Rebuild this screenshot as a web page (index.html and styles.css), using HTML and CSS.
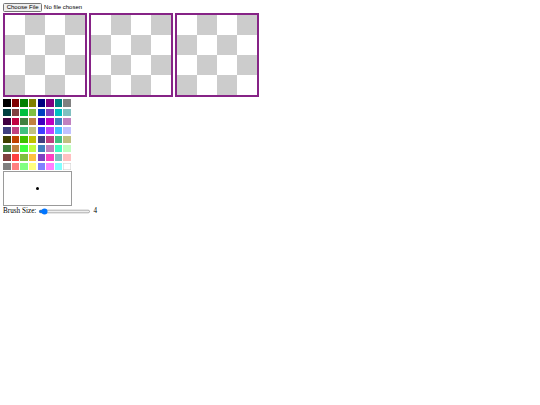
FILE: index.html
```html
<!DOCTYPE html>
<html>
<head>
<meta charset="utf-8">
<link rel="stylesheet" href="styles.css">
</head>
<body>
<div class="app">
  <input type="file" class="file">
  <div class="frames">
    <div class="frame"></div>
    <div class="frame"></div>
    <div class="frame"></div>
  </div>
  <div class="palette">
    <div class="sw" style="background:#000000"></div><div class="sw" style="background:#800000"></div><div class="sw" style="background:#008000"></div><div class="sw" style="background:#808000"></div><div class="sw" style="background:#000080"></div><div class="sw" style="background:#800080"></div><div class="sw" style="background:#008080"></div><div class="sw" style="background:#808080"></div>
    <div class="sw" style="background:#004040"></div><div class="sw" style="background:#804040"></div><div class="sw" style="background:#00c040"></div><div class="sw" style="background:#80c040"></div><div class="sw" style="background:#0040c0"></div><div class="sw" style="background:#8040c0"></div><div class="sw" style="background:#00c0c0"></div><div class="sw" style="background:#80c0c0"></div>
    <div class="sw" style="background:#400040"></div><div class="sw" style="background:#c00040"></div><div class="sw" style="background:#408040"></div><div class="sw" style="background:#c08040"></div><div class="sw" style="background:#4000c0"></div><div class="sw" style="background:#c000c0"></div><div class="sw" style="background:#4080c0"></div><div class="sw" style="background:#c080c0"></div>
    <div class="sw" style="background:#404080"></div><div class="sw" style="background:#c04080"></div><div class="sw" style="background:#40c080"></div><div class="sw" style="background:#c0c080"></div><div class="sw" style="background:#4040ff"></div><div class="sw" style="background:#c040ff"></div><div class="sw" style="background:#40c0ff"></div><div class="sw" style="background:#c0c0ff"></div>
    <div class="sw" style="background:#404000"></div><div class="sw" style="background:#c04000"></div><div class="sw" style="background:#40c000"></div><div class="sw" style="background:#c0c000"></div><div class="sw" style="background:#404080"></div><div class="sw" style="background:#c04080"></div><div class="sw" style="background:#40c080"></div><div class="sw" style="background:#c0c080"></div>
    <div class="sw" style="background:#408040"></div><div class="sw" style="background:#c08040"></div><div class="sw" style="background:#40ff40"></div><div class="sw" style="background:#c0ff40"></div><div class="sw" style="background:#4080c0"></div><div class="sw" style="background:#c080c0"></div><div class="sw" style="background:#40ffc0"></div><div class="sw" style="background:#c0ffc0"></div>
    <div class="sw" style="background:#804040"></div><div class="sw" style="background:#ff4040"></div><div class="sw" style="background:#80c040"></div><div class="sw" style="background:#ffc040"></div><div class="sw" style="background:#8040c0"></div><div class="sw" style="background:#ff40c0"></div><div class="sw" style="background:#80c0c0"></div><div class="sw" style="background:#ffc0c0"></div>
    <div class="sw" style="background:#808080"></div><div class="sw" style="background:#ff8080"></div><div class="sw" style="background:#80ff80"></div><div class="sw" style="background:#ffff80"></div><div class="sw" style="background:#8080ff"></div><div class="sw" style="background:#ff80ff"></div><div class="sw" style="background:#80ffff"></div><div class="sw sw-white" style="background:#ffffff"></div>
  </div>
  <div class="pad"><span class="dot"></span></div>
  <div class="brush">
    <label class="brush-label">Brush Size:</label>
    <input type="range" class="range" min="1" max="50" value="4">
    <span class="brush-value">4</span>
  </div>
</div>
</body>
</html>
```

FILE: styles.css
```css
html, body {
  background: #fff;
}
body {
  margin: 3px;
  font-family: "Liberation Serif", serif;
  font-size: 7.2px;
  color: #000;
}
.app {
  display: flex;
  flex-direction: column;
  align-items: flex-start;
}
.file {
  zoom: 0.45;
  font-family: "Liberation Sans", Arial, sans-serif;
  font-size: 13.33px;
  margin: 0;
  height: 21px;
}
.frames {
  display: flex;
  gap: 2px;
  margin-top: 0.5px;
  margin-bottom: 2px;
}
.frame {
  width: 80px;
  height: 80px;
  border: 2px solid #862386;
  background: repeating-conic-gradient(#cccccc 0 25%, #ffffff 0 50%) 0 0 / 40px 40px;
}
.palette {
  display: grid;
  grid-template-columns: repeat(8, 7.3px);
  grid-auto-rows: 7.2px;
  column-gap: 1.3px;
  row-gap: 1.9px;
  padding: 0.5px 0 0 0.3px;
  width: 68.5px;
}
.sw-white {
  box-shadow: inset 0 0 0 0.5px #ccc;
}
.pad {
  margin-top: 1px;
  width: 67px;
  height: 33px;
  border: 1px solid #9a9a9a;
  background: #fff;
  position: relative;
}
.dot {
  position: absolute;
  left: 32px;
  top: 15px;
  width: 3px;
  height: 3px;
  border-radius: 50%;
  background: #000;
}
.brush {
  display: flex;
  align-items: center;
  height: 9px;
  margin-top: 0.5px;
}
.brush-label {
  margin-right: 0.5px;
}
.range {
  zoom: 0.45;
  width: 118px;
  margin: 2px 6px 2px 2px;
}
.brush-value {
  color: #000;
}
```
